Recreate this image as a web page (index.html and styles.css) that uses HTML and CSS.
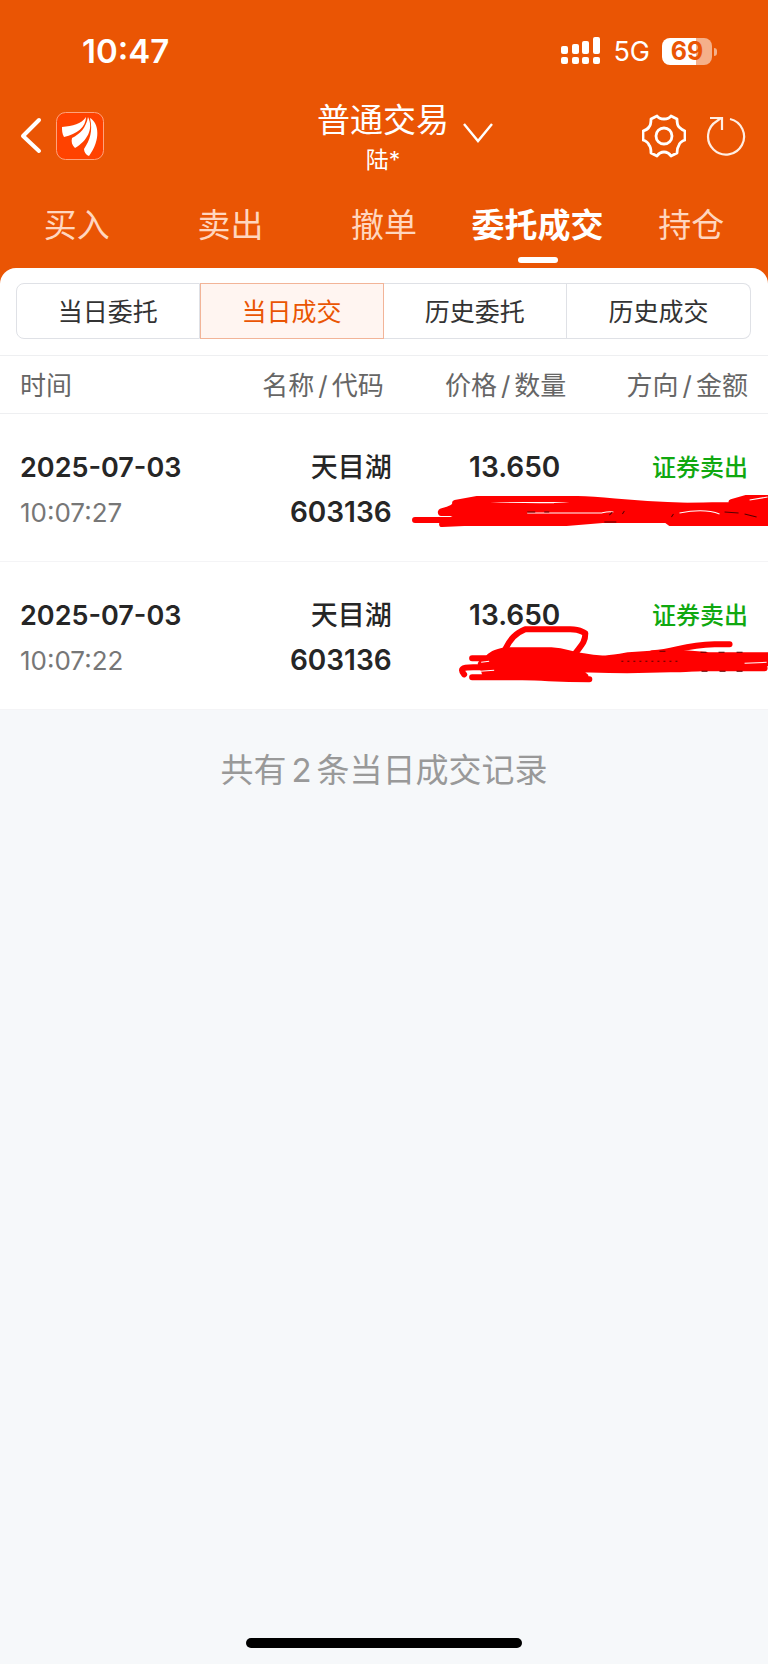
FILE: index.html
```html
<!DOCTYPE html>
<html lang="zh-CN">
<head>
<meta charset="utf-8">
<meta name="viewport" content="width=device-width, initial-scale=1">
<title>普通交易</title>
<link rel="stylesheet" href="styles.css">
</head>
<body>
<div class="app">
  <header class="header">
    <div class="status">
      <time class="clock">10:47</time>
      <div class="status-right">
        <svg class="signal" width="40" height="28" viewBox="0 0 40 28" fill="#fff" aria-hidden="true">
          <rect x="0" y="9" width="7" height="8" rx="2"/><rect x="11" y="7" width="7" height="10" rx="2"/><rect x="21" y="4" width="7" height="13" rx="2"/><rect x="32" y="0" width="7" height="17" rx="2"/>
          <rect x="0" y="20" width="7" height="7" rx="2"/><rect x="11" y="20" width="7" height="7" rx="2"/><rect x="21" y="20" width="7" height="7" rx="2"/><rect x="32" y="20" width="7" height="7" rx="2"/>
        </svg>
        <span class="network">5G</span>
        <span class="battery">69</span>
      </div>
    </div>
    <div class="nav">
      <div class="nav-left">
        <button class="icon-btn" aria-label="返回"><svg width="22" height="38" viewBox="0 0 22 38" fill="none" stroke="#fff" stroke-width="4" stroke-linecap="round" stroke-linejoin="round"><path d="M19 3L3 19l16 15"/></svg></button>
        <svg class="logo" width="48" height="48" viewBox="0 0 48 48" aria-hidden="true">
          <rect x="0.5" y="0.5" width="47" height="47" rx="9" fill="#ff4200" stroke="#ffa27c"/>
          <g fill="#fff"><path d="M6 15C17 14 25 12 30 5c0 10-9 17-22 20-2-3-2-7-2-10z"/><path d="M16 26c8-4 14-10 16-21 6 12-1 24-13 31-3-3-4-6-3-10z"/><path d="M28 37c6-9 9-18 6-31 9 5 11 22-1 38-3-1-5-4-5-7z"/></g>
        </svg>
      </div>
      <button class="account">
        <span class="account-name">普通交易</span>
        <span class="account-user">陆*</span>
        <svg class="chevron" width="30" height="20" viewBox="0 0 30 20" fill="none" stroke="#fff" stroke-width="2.400"><path d="M1 1l14 17L29 1"/></svg>
      </button>
      <div class="nav-right">
        <button class="icon-btn" aria-label="设置"><svg width="44" height="44" viewBox="0 0 44 44" fill="none" stroke="#fff" stroke-width="2.8" stroke-linejoin="round"><circle cx="22" cy="22" r="8"/><path d="M15 2C17 5 19 5 22 5s5 0 7-3l6 3c0 4 0 6 2 8s3 3 6 4v9c-3 1-5 2-6 5-2 3-2 4-2 8l-6 3c-2-3-4-4-7-4s-5 1-7 4l-6-3c0-4 0-6-2-8-1-3-3-4-6-5v-9c3-1 5-2 6-4 2-2 2-4 2-8z"/></svg></button>
        <button class="icon-btn" aria-label="刷新"><svg width="40" height="40" viewBox="0 0 40 40" fill="none" stroke="#ffeee4" stroke-width="2.200"><path d="M24 3A18 18 0 1 1 11 5L15 2"/><path d="M4 2h12v12"/></svg></button>
      </div>
    </div>
    <nav class="tabs">
      <a class="tab" href="#">买入</a>
      <a class="tab" href="#">卖出</a>
      <a class="tab" href="#">撤单</a>
      <a class="tab tab-active" href="#" aria-current="page">委托成交</a>
      <a class="tab" href="#">持仓</a>
    </nav>
  </header>
  <main class="main">
    <section class="card">
      <div class="segments">
        <button class="segment">当日委托</button>
        <button class="segment segment-active" aria-pressed="true">当日成交</button>
        <button class="segment">历史委托</button>
        <button class="segment">历史成交</button>
      </div>
      <div class="trades-wrap">
        <table class="trades">
          <thead>
            <tr><th class="col-time">时间</th><th class="col-name">名称<span class="slash">/</span>代码</th><th class="col-price">价格<span class="slash">/</span>数量</th><th class="col-side">方向<span class="slash">/</span>金额</th></tr>
          </thead>
          <tbody>
            <tr><td>2025-07-03<span class="time">10:07:27</span></td><td class="name">天目湖<span class="code">603136</span></td><td class="price">13.650</td><td class="side">证券卖出</td></tr>
            <tr><td>2025-07-03<span class="time">10:07:22</span></td><td class="name">天目湖<span class="code">603136</span></td><td class="price">13.650</td><td class="side">证券卖出</td></tr>
          </tbody>
        </table>
        <svg class="marks" viewBox="400 480 368 210" aria-hidden="true">
          <g fill="none" stroke="#f00" stroke-width="6" stroke-linecap="round" stroke-linejoin="round">
            <path d="M416 520h40M456 503l22-4h100c35 1 45 5 110 7M732 502l14-4h26"/>
            <path fill="#f00" d="M455 506c20-4 35 1 100 0 20-1 30-3 45-3 40 5 100 2 130 2l42-5v12c-30-1-50-2-80 1-60 0-80-1-110 0H480l-38 0c-2-3 8-2 13-7z"/>
            <path fill="#f00" d="M443 524l20-9h90c30 1 45 2 60 2 30-2 40-2 70-3 20 0 45-1 58 3h30v6H671l-4-3h-64l-36 3H465z"/>
            <path d="M506 649c5-10 10-16 20-20h45c10 0 10 2 15 4 0 9-4 12-10 20"/>
            <path fill="#f00" d="M487 660c4-6 9-8 20-10h45c15 1 18 4 32 6 18 4 28 2 45-1l30-2c30-1 40 1 50 2h60v8c-30 0-65 6-98 6-50 2-80 0-95 0l10 7h-30l-70-2c-1-8-10-10 1-14z"/>
            <path d="M473 658h50M465 674c-4-5-3-7 9-7h40M473 677h50c25 0 30 2 67 2M653 653c25-2 30-8 62-9h15M650 668h115M700 658h68"/>
          </g>
          <g fill="none" stroke="#fff" stroke-width="1"><path d="M528 513h74c4-1 7-2 12-1M482 662l8-1M481 671l14-1M750 500l18-3M680 513c15-3 30-3 40 1M745 663l22-1"/></g>
          <g fill="none" stroke="#500" stroke-width="1"><path d="M528 512h8M545 512h5M613 512l-3 3M625 511l-2 3M605 522h12M674 514l-2 3M725 512l14 1M745 514l12 3M701 652h6M719 652h6M737 652h6M702 671h6M720 671h6M737 671h6M660 651h6"/><path stroke-dasharray="2 4" d="M622 661h60"/></g>
        </svg>
      </div>
    </section>
    <p class="summary">共有<span class="count">2</span>条当日成交记录</p>
  </main>
  <div class="home-bar"></div>
</div>
</body>
</html>
```
FILE: styles.css
```css
* { box-sizing: border-box; }
body {
  margin: 0;
  background: #f6f8fa;
  color: #262626;
  font-family: Inter, "Noto Sans CJK SC", sans-serif;
}
button {
  padding: 0;
  border: 0;
  background: none;
  color: inherit;
  font: inherit;
}
svg { display: block; flex: none; }
.app {
  display: flex;
  flex-direction: column;
  min-height: 100vh;
}
.header { background: #ea5504; color: #fff; }
.status {
  display: flex;
  justify-content: space-between;
  align-items: center;
  height: 92px;
  padding: 10px 56px 0 82px;
}
.clock { font-size: 33px; font-weight: 600; }
.status-right { display: flex; align-items: center; }
.network { margin: 0 12px; font-size: 27px; }
.battery {
  position: relative;
  width: 50px;
  height: 27px;
  border-radius: 8px;
  background: linear-gradient(90deg, #fff 69%, #f5b08a 69%);
  color: #ea5504;
  font-size: 25px;
  font-weight: 700;
  line-height: 27px;
  text-align: center;
}
.battery::after {
  content: "";
  position: absolute;
  left: 52px;
  top: 10px;
  width: 3px;
  height: 8px;
  border-radius: 0 3px 3px 0;
  background: #f5b08a;
}
.nav {
  display: grid;
  grid-template-columns: 1fr auto 1fr;
  align-items: center;
  height: 88px;
  padding: 0 22px 0 20px;
}
.nav-left { display: flex; align-items: center; gap: 14px; }
.nav-right { display: flex; align-items: center; justify-content: flex-end; gap: 20px; }
.account {
  display: grid;
  grid-template-columns: 44px auto 44px;
  justify-items: center;
}
.account-name { grid-area: 1 / 2; font-size: 33px; line-height: 48px; }
.account-user { grid-area: 2 / 2; font-size: 23px; line-height: 32px; }
.chevron { grid-area: 1 / 3 / 3 / 4; align-self: start; justify-self: end; margin-top: 27px; }
.tabs { display: grid; grid-template-columns: repeat(5, 1fr); height: 88px; }
.tab {
  display: flex;
  flex-direction: column;
  align-items: center;
  color: #ffd6bf;
  font-size: 33px;
  line-height: 90px;
  text-decoration: none;
}
.tab-active { color: #fff; font-weight: 700; }
.tab-active::after {
  content: "";
  flex: none;
  width: 40px;
  height: 6px;
  margin-top: -13px;
  border-radius: 3px;
  background: #fff;
}
.main { flex: 1; background: linear-gradient(#ea5504 20px, transparent 20px); }
.card {
  padding-top: 15px;
  border-radius: 16px 16px 0 0;
  background: #fff;
}
.segments {
  display: grid;
  grid-template-columns: repeat(4, 1fr);
  height: 56px;
  margin: 0 17px 16px 16px;
}
.segment {
  padding-bottom: 2px;
  border: 1px solid #dfe1e6;
  border-left-width: 0;
  color: #333;
  font-size: 25px;
}
.segment:first-child { border-left-width: 1px; border-radius: 8px 0 0 8px; }
.segment:last-child { border-radius: 0 8px 8px 0; }
.segment-active {
  border: 1px solid #f2b498;
  background: #fff5f1;
  color: #ea5504;
}
.trades-wrap { position: relative; }
.trades {
  width: 100%;
  border-collapse: collapse;
  table-layout: fixed;
  font-size: 27px;
}
.trades th {
  height: 58px;
  padding: 0 0 2px;
  border: solid #eeeff1;
  border-width: 1px 0;
  color: #666;
  font-size: 26px;
  font-weight: 400;
  text-align: right;
}
.slash { margin: 0 4px; }
.trades td {
  height: 148px;
  padding: 31px 0 26px;
  border-bottom: 1px solid #f4f4f6;
  font-weight: 600;
  line-height: 45px;
  text-align: right;
  vertical-align: top;
}
.trades th:first-child, .trades td:first-child { padding-left: 20px; text-align: left; }
.trades .col-time { width: 27%; }
.trades .col-name { width: 24%; padding-right: 8px; }
.trades .col-price { width: 23%; padding-right: 2px; }
.trades .col-side { width: 26%; padding-right: 20px; }
.trades .price { padding-right: 8px; font-size: 28px; }
.trades .side { padding-right: 20px; color: #10a810; font-size: 24px; font-weight: 500; }
.trades .name { font-weight: 500; }
.code { display: block; font-size: 28px; font-weight: 600; }
.time { display: block; color: #777; font-size: 26px; font-weight: 400; }
.marks {
  position: absolute;
  right: 0;
  top: 125px;
  width: 48%;
  overflow: hidden;
}
.summary {
  margin: 0;
  padding: 36px 0;
  color: #999;
  font-size: 33px;
  line-height: 48px;
  text-align: center;
}
.count { margin: 0 5px; }
.home-bar {
  align-self: center;
  width: 36%;
  height: 10px;
  margin-bottom: 16px;
  border-radius: 5px;
  background: #000;
}
```
